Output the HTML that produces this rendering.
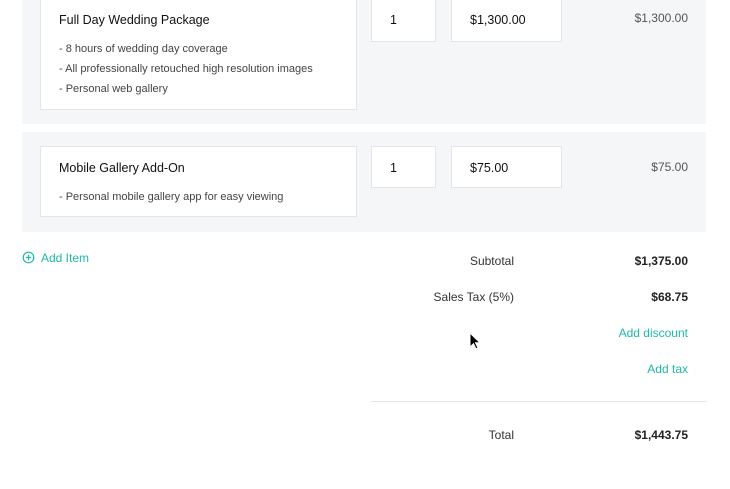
<!DOCTYPE html>
<html><head><style>
*{margin:0;padding:0;box-sizing:border-box}
body{width:730px;height:489px;background:#fff;font-family:"Liberation Sans",sans-serif;position:relative;overflow:hidden;color:#222}
.a{position:absolute}
.row{background:#f5f6f8;left:22px;width:684px}
.box{background:#fff;border:1px solid #e3e5e8}
.t{font-size:12.5px;color:#111}
.d{font-size:11px;color:#444;line-height:20px}
.r{text-align:right}
.g{color:#1fb8a6}
</style></head><body>
<div class="a row" style="top:0;height:124px"></div>
<div class="a row" style="top:132px;height:100px"></div>

<div class="a box" style="left:40px;top:-2px;width:317px;height:112px"></div>
<div class="a t" style="left:59px;top:13px">Full Day Wedding Package</div>
<div class="a d" style="left:59px;top:39px">- 8 hours of wedding day coverage<br>- All professionally retouched high resolution images<br>- Personal web gallery</div>
<div class="a box" style="left:371px;top:-2px;width:65px;height:44px"></div>
<div class="a t" style="left:390px;top:13px">1</div>
<div class="a box" style="left:451px;top:-2px;width:111px;height:44px"></div>
<div class="a t" style="left:470px;top:13px">$1,300.00</div>
<div class="a d r" style="right:42px;top:8px;font-size:12px;color:#555">$1,300.00</div>

<div class="a box" style="left:40px;top:146px;width:317px;height:71px"></div>
<div class="a t" style="left:59px;top:161px">Mobile Gallery Add-On</div>
<div class="a d" style="left:59px;top:187px">- Personal mobile gallery app for easy viewing</div>
<div class="a box" style="left:371px;top:146px;width:65px;height:42px"></div>
<div class="a t" style="left:390px;top:161px">1</div>
<div class="a box" style="left:451px;top:146px;width:111px;height:42px"></div>
<div class="a t" style="left:470px;top:161px">$75.00</div>
<div class="a d r" style="right:42px;top:157px;font-size:12px;color:#555">$75.00</div>

<svg class="a" style="left:22px;top:251px" width="13" height="13" viewBox="0 0 13 13"><circle cx="6.5" cy="6.5" r="5.3" fill="none" stroke="#1fb8a6" stroke-width="1.2"/><path d="M6.5 3.8v5.4M3.8 6.5h5.4" stroke="#1fb8a6" stroke-width="1.2"/></svg>
<div class="a g" style="left:41px;top:251px;font-size:12px">Add Item</div>

<div class="a r" style="right:216px;top:254px;font-size:12px;color:#333">Subtotal</div>
<div class="a r" style="right:42px;top:254px;font-size:12px;font-weight:bold">$1,375.00</div>
<div class="a r" style="right:216px;top:290px;font-size:12px;color:#333">Sales Tax (5%)</div>
<div class="a r" style="right:42px;top:290px;font-size:12px;font-weight:bold">$68.75</div>
<div class="a r g" style="right:42px;top:326px;font-size:12px">Add discount</div>
<div class="a r g" style="right:42px;top:362px;font-size:12px">Add tax</div>
<div class="a" style="left:371px;top:401px;width:335px;height:1px;background:#e3e5e8"></div>
<div class="a r" style="right:216px;top:428px;font-size:12px;color:#333">Total</div>
<div class="a r" style="right:42px;top:428px;font-size:12px;font-weight:bold">$1,443.75</div>

<svg class="a" style="left:469px;top:332px" width="12" height="18" viewBox="0 0 12 18"><path d="M1 1v14l3.5-3.3 2.5 5.3 2-1-2.5-5.2H11z" fill="#000" stroke="#fff" stroke-width="1"/></svg>
</body></html>
